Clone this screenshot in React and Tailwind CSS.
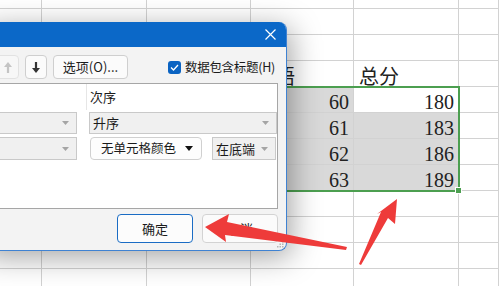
import React from "react";

const rows = Array.from({ length: 12 }, (_, i) => i);
const data = { 4: ["60", "180"], 5: ["61", "183"], 6: ["62", "186"], 7: ["63", "189"] };

const Caret = () => (
  <svg width="7" height="4" viewBox="0 0 7 4" className="shrink-0">
    <polygon points="0,0 7,0 3.5,4" fill="#a5a5a5" />
  </svg>
);

const SheetCell = ({ row, col }) => {
  const gray = row >= 4 && row <= 7 && (col === 3 || (col === 4 && row !== 4));
  let content = null;
  if (row === 3 && col === 3) content = <span className="pl-[4px] font-['Noto_Sans_CJK_SC',sans-serif] text-[20px] leading-none">英语</span>;
  if (row === 3 && col === 4) content = <span className="pl-[5px] font-['Noto_Sans_CJK_SC',sans-serif] text-[20px] leading-none">总分</span>;
  if (data[row] && (col === 3 || col === 4))
    content = (
      <span className="ml-auto pr-[4px] font-['Liberation_Serif',serif] text-[20px] leading-none">
        {data[row][col - 3]}
      </span>
    );
  return (
    <div
      className={`flex items-end border-r border-b border-[#d2d2d2] text-[#222] ${gray ? "bg-[#d9d9d9]" : "bg-white"}`}
    >
      {content}
    </div>
  );
};

const Dropdown = ({ className, children }) => (
  <div className={`flex items-center justify-between border border-[#c9c9c9] bg-[#f0f0f0] pl-[3px] pr-[7px] ${className}`}>
    <span>{children}</span>
    <Caret />
  </div>
);

export default function App() {
  return (
    <div className="relative h-[286px] w-[499px] overflow-hidden bg-white">
      {/* spreadsheet */}
      <div className="mt-[-17px] grid grid-cols-[42px_105px_104px_103px_105px_1fr] grid-rows-[repeat(12,26px)]">
        {rows.map((r) => [0, 1, 2, 3, 4, 5].map((c) => <SheetCell key={`${r}-${c}`} row={r} col={c} />))}
      </div>

      {/* selection */}
      <div className="absolute left-[250px] top-[86px] h-[106px] w-[210px] border-2 border-[#4c9f50]" />
      <div className="absolute left-[456px] top-[188px] h-[5px] w-[5px] bg-[#4c9f50] outline outline-1 outline-white" />

      {/* sort dialog */}
      <div className="absolute left-[-20px] top-[22px] flex h-[229px] w-[307px] flex-col overflow-hidden rounded-tr-[8px] rounded-br-[8px] border-r border-b border-[#3f82d2] bg-[#f3f3f3] font-['Noto_Sans_CJK_SC',sans-serif] text-[13px] text-[#1b1b1b] shadow-[4px_6px_30px_rgba(0,0,0,0.36)]">
        <div className="flex h-[25px] shrink-0 items-center justify-end bg-[#0b68c8] pr-[10px]">
          <svg width="11" height="11" viewBox="0 0 11 11">
            <path d="M0.5 0.5 L10.5 10.5 M10.5 0.5 L0.5 10.5" stroke="#fff" strokeWidth="1.2" />
          </svg>
        </div>

        <div className="mt-[8px] flex h-[24px] items-center pl-[16px]">
          <div className="flex h-[24px] w-[23px] items-center justify-center rounded-[4px] border border-[#e2e2e2] bg-[#f7f7f7]">
            <svg width="10" height="13" viewBox="0 0 10 13">
              <path d="M5 4 V12" stroke="#c4c4c4" strokeWidth="2.2" />
              <polygon points="1,6 9,6 5,1" fill="#c4c4c4" />
            </svg>
          </div>
          <div className="ml-[6px] flex h-[24px] w-[22px] items-center justify-center rounded-[4px] border border-[#cfcfcf] bg-[#fbfbfb]">
            <svg width="10" height="13" viewBox="0 0 10 13">
              <path d="M5 1 V9" stroke="#333" strokeWidth="2.2" />
              <polygon points="1,7 9,7 5,12" fill="#333" />
            </svg>
          </div>
          <div className="ml-[6px] flex h-[24px] w-[75px] items-center justify-center rounded-[4px] border border-[#cfcfcf] bg-[#fbfbfb]">
            选项(O)...
          </div>
          <div className="ml-[40px] flex items-center gap-[4px]">
            <div className="flex h-[13px] w-[13px] shrink-0 items-center justify-center rounded-[3px] bg-[#0a63c2]">
              <svg width="9" height="7" viewBox="0 0 9 7">
                <path d="M1 3.5 L3.5 6 L8 1" stroke="#fff" strokeWidth="1.3" fill="none" />
              </svg>
            </div>
            <span className="whitespace-nowrap text-[12.5px] tracking-[-0.3px]">数据包含标题(H)</span>
          </div>
        </div>

        <div className="mx-[8px] mt-[4px] flex h-[126px] flex-col border border-[#a6a6a6] bg-white">
          <div className="flex h-[26px] items-center">
            <div className="h-full w-[98px] border-r border-[#e6e6e6]" />
            <span className="pl-[3px]">次序</span>
          </div>
          <div className="mt-[2px] flex h-[22px]">
            <Dropdown className="w-[88px]" />
            <Dropdown className="ml-[12px] w-[188px]">升序</Dropdown>
          </div>
          <div className="mt-[3px] flex h-[23px]">
            <Dropdown className="w-[88px]" />
            <div className="ml-[13px] flex w-[112px] items-center justify-between rounded-[4px] border border-[#d0d0d0] bg-[#fdfdfd] pl-[10px] pr-[8px]">
              <span className="text-[12.5px]">无单元格颜色</span>
              <svg width="8" height="5" viewBox="0 0 8 5">
                <polygon points="0,0 8,0 4,5" fill="#111" />
              </svg>
            </div>
            <Dropdown className="ml-[10px] w-[64px]">在底端</Dropdown>
          </div>
        </div>

        <div className="mt-[5px] flex justify-end gap-[9px] pr-[8px]">
          <div className="flex h-[29px] w-[76px] items-center justify-center rounded-[4px] border border-[#1a6cc4] bg-[#fcfcfc]">
            确定
          </div>
          <div className="flex h-[29px] w-[76px] items-center justify-center rounded-[4px] border border-[#d3d3d3] bg-[#fbfbfb]">
            取消
          </div>
        </div>
        <svg width="7" height="7" viewBox="0 0 7 7" className="absolute right-[2px] bottom-[2px]">
          <g fill="#b5b5b5">
            <rect x="5" y="0" width="1.5" height="1.5" />
            <rect x="2.5" y="2.5" width="1.5" height="1.5" />
            <rect x="5" y="2.5" width="1.5" height="1.5" />
            <rect x="0" y="5" width="1.5" height="1.5" />
            <rect x="2.5" y="5" width="1.5" height="1.5" />
            <rect x="5" y="5" width="1.5" height="1.5" />
          </g>
        </svg>
      </div>

      {/* annotation arrows */}
      <svg width="499" height="286" viewBox="0 0 499 286" className="pointer-events-none absolute left-0 top-0">
        <polygon
          points="205,227 229,214 227,222 347,247 346,250 225,235 226,242"
          fill="#ee3b3a"
        />
        <polygon
          points="397,199 395,224 388,218 361,265 359,264 381,212 377,214"
          fill="#ee3b3a"
        />
      </svg>
    </div>
  );
}
